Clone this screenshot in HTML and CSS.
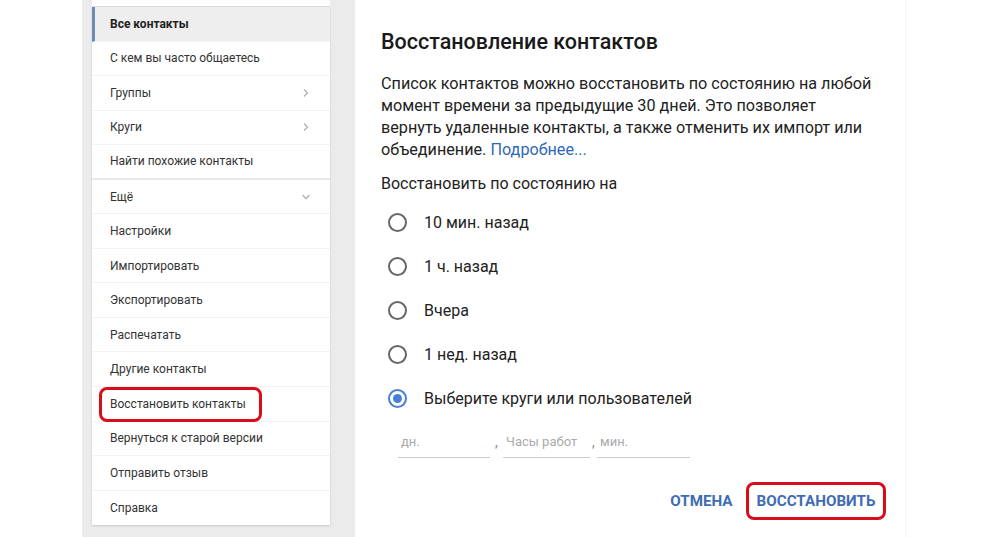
FILE: index.html
```html
<!DOCTYPE html>
<html lang="ru">
<head>
    <meta charset="UTF-8">
    <meta name="viewport" content="width=device-width, initial-scale=1.0">
    <title>Восстановление контактов</title>
    <link rel="stylesheet" href="styles.css">
</head>
<body>
    <div class="page">
        <div class="side-panel">
            <div class="card-stub"></div>
            <ul class="menu">
                <li class="menu-item active">Все контакты</li>
                <li class="menu-item">С кем вы часто общаетесь</li>
                <li class="menu-item">Группы
                    <svg class="chevron" width="10" height="10" viewBox="0 0 10 10"><path d="M3 1.5 L6.5 5 L3 8.5" /></svg>
                </li>
                <li class="menu-item">Круги
                    <svg class="chevron" width="10" height="10" viewBox="0 0 10 10"><path d="M3 1.5 L6.5 5 L3 8.5" /></svg>
                </li>
                <li class="menu-item section-end">Найти похожие контакты</li>
                <li class="menu-item">Ещё
                    <svg class="chevron" width="10" height="10" viewBox="0 0 10 10"><path d="M1.5 3 L5 6.5 L8.5 3" /></svg>
                </li>
                <li class="menu-item">Настройки</li>
                <li class="menu-item">Импортировать</li>
                <li class="menu-item">Экспортировать</li>
                <li class="menu-item">Распечатать</li>
                <li class="menu-item">Другие контакты</li>
                <li class="menu-item marked">Восстановить контакты</li>
                <li class="menu-item">Вернуться к старой версии</li>
                <li class="menu-item">Отправить отзыв</li>
                <li class="menu-item last">Справка</li>
            </ul>
        </div>

        <div class="dialog">
            <h1>Восстановление контактов</h1>
            <p class="intro">Список контактов можно восстановить по состоянию на любой<br>
                момент времени за предыдущие 30 дней. Это позволяет<br>
                вернуть удаленные контакты, а также отменить их импорт или<br>
                объединение. <a href="#">Подробнее...</a></p>
            <p class="label">Восстановить по состоянию на</p>

            <div class="options">
                <label class="option"><span class="radio"></span>10 мин. назад</label>
                <label class="option"><span class="radio"></span>1 ч. назад</label>
                <label class="option"><span class="radio"></span>Вчера</label>
                <label class="option"><span class="radio"></span>1 нед. назад</label>
                <label class="option"><span class="radio checked"></span>Выберите круги или пользователей</label>
            </div>

            <div class="custom-time">
                <input type="text" class="field-days" placeholder="дн.">
                <span class="comma">,</span>
                <input type="text" class="field-hours" placeholder="Часы работ">
                <span class="comma narrow">,</span>
                <input type="text" class="field-mins" placeholder="мин.">
            </div>

            <div class="actions">
                <button class="btn">Отмена</button>
                <button class="btn marked-btn">Восстановить</button>
            </div>
        </div>
    </div>
</body>
</html>
```

FILE: styles.css
```css
/* Global Styles */
body {
    margin: 0;
    padding: 0;
    background-color: #fff;
    font-family: 'Roboto', 'Liberation Sans', sans-serif;
    color: #222;
}

.page {
    display: flex;
    height: 537px;
    padding-left: 82px;
    overflow: hidden;
}

/* Left panel */
.side-panel {
    width: 238px;
    background-color: #ebebeb;
    padding: 0 25px 14px 10px;
    display: flex;
    flex-direction: column;
}

.card-stub {
    height: 6px;
    background-color: #fff;
    border-bottom: 1px solid #dedede;
    flex-shrink: 0;
}

.menu {
    list-style: none;
    margin: 0;
    padding: 0;
    background-color: #fff;
    box-shadow: 0 1px 2px rgba(0, 0, 0, 0.15);
}

.menu-item {
    position: relative;
    display: flex;
    align-items: center;
    justify-content: space-between;
    height: 34.55px;
    box-sizing: border-box;
    padding: 0 19px 0 18px;
    font-size: 12px;
    color: #333;
    border-bottom: 1px solid #f3f3f3;
}

.menu-item.active {
    background-color: #eee;
    border-left: 3px solid #6b8bb8;
    padding-left: 15px;
    font-weight: bold;
    color: #222;
}

.menu-item.section-end {
    border-bottom: 2px solid #e8e8e8;
}

.menu-item.last {
    border-bottom: none;
}

.chevron path {
    fill: none;
    stroke: #b0b0b0;
    stroke-width: 1.3;
}

.menu-item.marked::after {
    content: "";
    position: absolute;
    left: 7px;
    right: 68px;
    top: 0;
    bottom: -1px;
    border: 3px solid #d90d1a;
    border-radius: 8px;
}

/* Dialog */
.dialog {
    width: 524px;
    padding: 27px 0 0 26px;
    border-right: 1px solid #f4f4f4;
}

h1 {
    margin: 0;
    font-size: 21.5px;
    font-weight: 500;
    line-height: 30px;
    color: #1a1a1a;
}

.intro {
    margin: 16px 0 0;
    font-size: 16.2px;
    line-height: 22px;
}

.intro a {
    color: #2f68b8;
    text-decoration: none;
}

.label {
    margin: 12px 0 0;
    font-size: 16px;
    line-height: 22px;
}

.options {
    margin-top: 5px;
}

.option {
    display: flex;
    align-items: center;
    height: 44px;
    font-size: 16px;
    padding-left: 7px;
}

.radio {
    width: 15px;
    height: 15px;
    border: 2px solid #666;
    border-radius: 50%;
    margin-right: 17px;
    box-sizing: content-box;
    position: relative;
}

.radio.checked {
    border-color: #4a7fd6;
}

.radio.checked::after {
    content: "";
    position: absolute;
    left: 3px;
    top: 3px;
    width: 9px;
    height: 9px;
    border-radius: 50%;
    background-color: #4a7fd6;
}

.custom-time {
    display: flex;
    align-items: flex-end;
    margin: 10px 0 0 17px;
}

.custom-time input {
    border: none;
    border-bottom: 1px solid #ccc;
    padding: 4px 0 8px 3px;
    font-family: 'Roboto', 'Liberation Sans', sans-serif;
    font-size: 13px;
    outline: none;
    box-sizing: border-box;
}

.field-days {
    width: 92px;
}

.field-hours {
    width: 87px;
}

.field-mins {
    width: 93px;
}

.custom-time input::placeholder {
    color: #aaa;
}

.comma {
    width: 13px;
    text-align: center;
    font-size: 14px;
    color: #888;
    padding-bottom: 8px;
}

.comma.narrow {
    width: 7px;
}

.actions {
    display: flex;
    justify-content: flex-end;
    align-items: center;
    gap: 3px;
    margin: 24px 19px 0 0;
}

.btn {
    background: none;
    border: 3px solid transparent;
    border-radius: 8px;
    padding: 7px 7.5px;
    font-family: 'Roboto', 'Liberation Sans', sans-serif;
    font-size: 15.2px;
    font-weight: bold;
    text-transform: uppercase;
    color: #3f6cb5;
    cursor: pointer;
}

.btn.marked-btn {
    border-color: #d90d1a;
}
```
